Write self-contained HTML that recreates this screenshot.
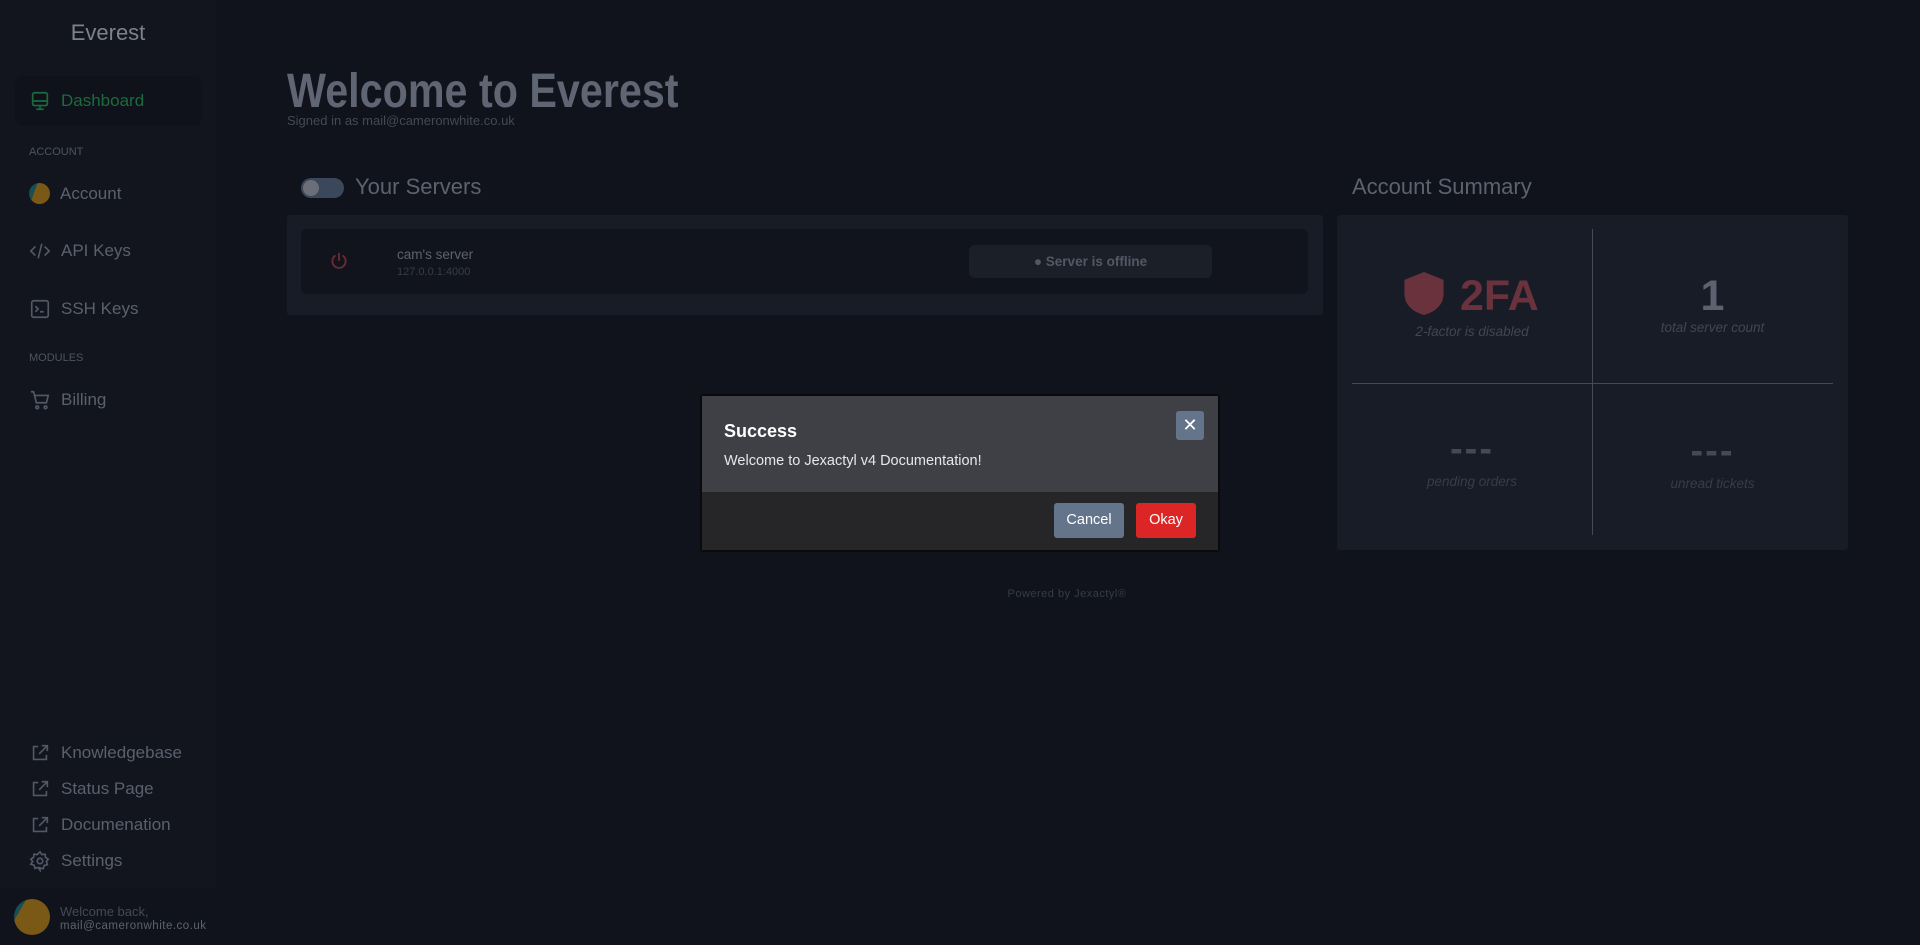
<!DOCTYPE html>
<html><head><meta charset="utf-8">
<style>
*{margin:0;padding:0;box-sizing:border-box}
body{width:1920px;height:945px;overflow:hidden;background:#10131b;font-family:"Liberation Sans",sans-serif;position:relative;color:#5c6270}
.abs{position:absolute}
.side{left:0;top:0;width:216px;height:888px;background:#12151e}
.nav{position:absolute;left:29px;display:flex;align-items:center;gap:10px;font-size:17px;color:#5a606d}
.nav svg{width:22px;height:22px;stroke:#525866;fill:none;stroke-width:1.8}
.sec{position:absolute;left:29px;font-size:11px;color:#4d5360}
.cen{text-align:center}
</style></head><body>
<div class="abs side"></div>
<div class="abs" style="left:0;width:216px;top:20px;text-align:center;font-size:22px;color:#7c818b">Everest</div>
<div class="abs" style="left:15px;top:76px;width:187px;height:50px;background:#0f121a;border-radius:8px"></div>
<div class="nav" style="top:90px;color:#1b6b3c"><svg viewBox="0 0 24 24" style="stroke:#1b6b3c"><rect x="4" y="3" width="16" height="14" rx="2"/><path d="M4 12h16M12 17v3M8 21h8"/></svg>Dashboard</div>
<div class="sec" style="top:146px">ACCOUNT</div>
<div class="nav" style="top:183px"><div style="width:21px;height:21px;border-radius:50%;background:linear-gradient(110deg,#174f55 30%,#7a5816 30%)"></div>Account</div>
<div class="nav" style="top:240px"><svg viewBox="0 0 24 24"><path d="M7 7l-5 5 5 5M17 7l5 5-5 5M14 4l-4 16"/></svg>API Keys</div>
<div class="nav" style="top:298px"><svg viewBox="0 0 24 24"><rect x="3" y="3" width="18" height="18" rx="2"/><path d="M7 9l3 3-3 3M12 15h4"/></svg>SSH Keys</div>
<div class="sec" style="top:352px">MODULES</div>
<div class="nav" style="top:389px"><svg viewBox="0 0 24 24"><path d="M2 3h3l3 12h11l2-8H6"/><circle cx="9" cy="20" r="1.5"/><circle cx="18" cy="20" r="1.5"/></svg>Billing</div>
<div class="nav" style="top:742px"><svg viewBox="0 0 24 24"><path d="M10 5H5v14h14v-5M14 4h6v6M20 4L11 13"/></svg>Knowledgebase</div>
<div class="nav" style="top:778px"><svg viewBox="0 0 24 24"><path d="M10 5H5v14h14v-5M14 4h6v6M20 4L11 13"/></svg>Status Page</div>
<div class="nav" style="top:814px"><svg viewBox="0 0 24 24"><path d="M10 5H5v14h14v-5M14 4h6v6M20 4L11 13"/></svg>Documenation</div>
<div class="nav" style="top:850px"><svg viewBox="0 0 24 24"><circle cx="12" cy="12" r="3"/><path d="M12 2l2 3 3.5-.5.5 3.5 3 2-2 2.5 1 3.5-3.5 1-1 3.5-3.5-1L12 22l-2-3-3.5 1-1-3.5L2 15.5l2-3-2-2.5 3-2 .5-3.5 3.5.5z"/></svg>Settings</div>
<div class="abs" style="left:14px;top:899px;width:36px;height:36px;border-radius:50%;background:linear-gradient(120deg,#174f55 22%,#7a5816 22%)"></div>
<div class="abs" style="left:60px;top:904px;font-size:13px;color:#434956">Welcome back,</div>
<div class="abs" style="left:60px;top:920px;font-size:11.5px;color:#5c6270;letter-spacing:.5px">mail@cameronwhite.co.uk</div>

<div class="abs" style="left:287px;top:64px;font-size:48px;font-weight:bold;color:#5f6573;transform:scaleX(.86);transform-origin:left top;white-space:nowrap">Welcome to Everest</div>
<div class="abs" style="left:287px;top:113px;font-size:13px;color:#434956">Signed in as mail@cameronwhite.co.uk</div>

<div class="abs" style="left:301px;top:178px;width:43px;height:20px;border-radius:10px;background:#3b475a"></div>
<div class="abs" style="left:303px;top:180px;width:16px;height:16px;border-radius:50%;background:#6a6f79"></div>
<div class="abs" style="left:355px;top:174px;font-size:22px;color:#5c6270">Your Servers</div>
<div class="abs" style="left:287px;top:215px;width:1036px;height:100px;background:#181c26;border-radius:3px"></div>
<div class="abs" style="left:301px;top:229px;width:1007px;height:65px;background:#11141c;border-radius:6px"></div>
<svg class="abs" style="left:329px;top:251px" width="20" height="20" viewBox="0 0 24 24" fill="none" stroke="#6e2a34" stroke-width="2.2" stroke-linecap="round"><path d="M12 3v8M7 6a8 8 0 1 0 10 0"/></svg>
<div class="abs" style="left:397px;top:247px;font-size:13.5px;color:#5c6270">cam's server</div>
<div class="abs" style="left:397px;top:266px;font-size:11px;color:#363c48">127.0.0.1:4000</div>
<div class="abs cen" style="left:969px;top:245px;width:243px;height:33px;background:#1b1f28;border-radius:6px;font-size:13.5px;font-weight:bold;color:#525866;line-height:33px">&#9679; Server is offline</div>

<div class="abs" style="left:1352px;top:174px;font-size:22px;color:#5c6270">Account Summary</div>
<div class="abs" style="left:1337px;top:215px;width:511px;height:335px;background:#181c26;border-radius:3px"></div>
<div class="abs" style="left:1592px;top:229px;width:1px;height:306px;background:#434956"></div>
<div class="abs" style="left:1352px;top:383px;width:481px;height:1px;background:#434956"></div>
<svg class="abs" style="left:1404px;top:272px" width="40" height="43" viewBox="0 0 40 44"><path d="M20 0L40 8v14c0 12-9 19-20 22C9 41 0 34 0 22V8z" fill="#6a323c"/></svg>
<div class="abs" style="left:1460px;top:272px;font-size:43px;font-weight:bold;color:#6a323c">2FA</div>
<div class="abs cen" style="left:1352px;width:240px;top:324px;font-size:13.5px;font-style:italic;color:#404653">2-factor is disabled</div>
<div class="abs cen" style="left:1592px;width:241px;top:272px;font-size:43px;font-weight:bold;color:#5c6270">1</div>
<div class="abs cen" style="left:1592px;width:241px;top:320px;font-size:13.5px;font-style:italic;color:#404653">total server count</div>
<div class="abs cen" style="left:1352px;width:240px;top:428px;font-size:38px;font-weight:bold;color:#434956;letter-spacing:2px">---</div>
<div class="abs cen" style="left:1352px;width:240px;top:474px;font-size:13.5px;font-style:italic;color:#363c48">pending orders</div>
<div class="abs cen" style="left:1592px;width:241px;top:430px;font-size:38px;font-weight:bold;color:#434956;letter-spacing:2px">---</div>
<div class="abs cen" style="left:1592px;width:241px;top:476px;font-size:13.5px;font-style:italic;color:#363c48">unread tickets</div>

<div class="abs cen" style="left:900px;width:334px;top:588px;font-size:11px;color:#363c48;letter-spacing:.5px">Powered by Jexactyl®</div>

<div class="abs" style="left:700px;top:394px;width:520px;height:158px;background:#0a0a0c;border-radius:4px"></div>
<div class="abs" style="left:702px;top:396px;width:516px;height:96px;background:#3f4046"></div>
<div class="abs" style="left:702px;top:492px;width:516px;height:58px;background:#262628"></div>
<div class="abs" style="left:724px;top:421px;font-size:18px;font-weight:bold;color:#fff">Success</div>
<div class="abs" style="left:724px;top:453px;font-size:14.5px;color:#e5e7eb">Welcome to Jexactyl v4 Documentation!</div>
<div class="abs cen" style="left:1176px;top:411px;width:28px;height:29px;background:#64748b;border-radius:3px;color:#fff;font-size:18px;line-height:29px">✕</div>
<div class="abs cen" style="left:1054px;top:503px;width:70px;height:35px;background:#64748b;border-radius:3px;color:#fff;font-size:14.5px;line-height:35px">Cancel</div>
<div class="abs cen" style="left:1136px;top:503px;width:60px;height:35px;background:#dc2626;border-radius:3px;color:#fff;font-size:14.5px;line-height:35px">Okay</div>
</body></html>
